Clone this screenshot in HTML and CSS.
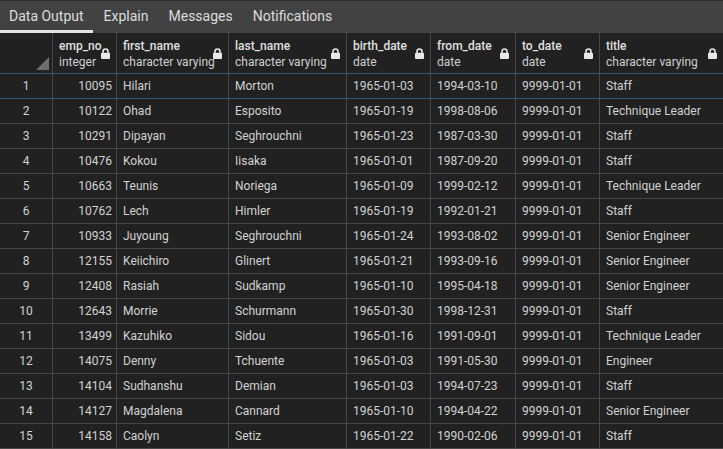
FILE: index.html
```html
<!DOCTYPE html>
<html>
<head>
<meta charset="utf-8">
<link rel="stylesheet" href="styles.css">
</head>
<body>
<div class="tabs">
  <div class="tab active">Data Output</div>
  <div class="tab">Explain</div>
  <div class="tab">Messages</div>
  <div class="tab">Notifications</div>
</div>
<div class="grid">
  <div class="row head">
    <div class="c c0 corner"><svg width="13" height="13" viewBox="0 0 13 13"><path d="M13 0 L13 13 L0 13 Z" fill="#6e6e6e"/></svg></div>
    <div class="c c1"><div class="n">emp_no</div><div class="t">integer</div><svg class="lock" viewBox="0 0 11 11"><path d="M3 5 V3.5 a2.5 2.5 0 0 1 5 0 V5" fill="none" stroke="#e8e8e8" stroke-width="1.6"/><rect x="1" y="4.8" width="9" height="6.2" rx="1" fill="#e8e8e8"/></svg></div>
    <div class="c c2"><div class="n">first_name</div><div class="t">character varying</div><svg class="lock" viewBox="0 0 11 11"><path d="M3 5 V3.5 a2.5 2.5 0 0 1 5 0 V5" fill="none" stroke="#e8e8e8" stroke-width="1.6"/><rect x="1" y="4.8" width="9" height="6.2" rx="1" fill="#e8e8e8"/></svg></div>
    <div class="c c3"><div class="n">last_name</div><div class="t">character varying</div><svg class="lock" viewBox="0 0 11 11"><path d="M3 5 V3.5 a2.5 2.5 0 0 1 5 0 V5" fill="none" stroke="#e8e8e8" stroke-width="1.6"/><rect x="1" y="4.8" width="9" height="6.2" rx="1" fill="#e8e8e8"/></svg></div>
    <div class="c c4"><div class="n">birth_date</div><div class="t">date</div><svg class="lock" viewBox="0 0 11 11"><path d="M3 5 V3.5 a2.5 2.5 0 0 1 5 0 V5" fill="none" stroke="#e8e8e8" stroke-width="1.6"/><rect x="1" y="4.8" width="9" height="6.2" rx="1" fill="#e8e8e8"/></svg></div>
    <div class="c c5"><div class="n">from_date</div><div class="t">date</div><svg class="lock" viewBox="0 0 11 11"><path d="M3 5 V3.5 a2.5 2.5 0 0 1 5 0 V5" fill="none" stroke="#e8e8e8" stroke-width="1.6"/><rect x="1" y="4.8" width="9" height="6.2" rx="1" fill="#e8e8e8"/></svg></div>
    <div class="c c6"><div class="n">to_date</div><div class="t">date</div><svg class="lock" viewBox="0 0 11 11"><path d="M3 5 V3.5 a2.5 2.5 0 0 1 5 0 V5" fill="none" stroke="#e8e8e8" stroke-width="1.6"/><rect x="1" y="4.8" width="9" height="6.2" rx="1" fill="#e8e8e8"/></svg></div>
    <div class="c c7"><div class="n">title</div><div class="t">character varying</div><svg class="lock" viewBox="0 0 11 11"><path d="M3 5 V3.5 a2.5 2.5 0 0 1 5 0 V5" fill="none" stroke="#e8e8e8" stroke-width="1.6"/><rect x="1" y="4.8" width="9" height="6.2" rx="1" fill="#e8e8e8"/></svg></div>
  </div>
  <div class="row sel"><div class="c c0">1</div><div class="c c1">10095</div><div class="c c2">Hilari</div><div class="c c3">Morton</div><div class="c c4">1965-01-03</div><div class="c c5">1994-03-10</div><div class="c c6">9999-01-01</div><div class="c c7">Staff</div></div>
  <div class="row"><div class="c c0">2</div><div class="c c1">10122</div><div class="c c2">Ohad</div><div class="c c3">Esposito</div><div class="c c4">1965-01-19</div><div class="c c5">1998-08-06</div><div class="c c6">9999-01-01</div><div class="c c7">Technique Leader</div></div>
  <div class="row"><div class="c c0">3</div><div class="c c1">10291</div><div class="c c2">Dipayan</div><div class="c c3">Seghrouchni</div><div class="c c4">1965-01-23</div><div class="c c5">1987-03-30</div><div class="c c6">9999-01-01</div><div class="c c7">Staff</div></div>
  <div class="row"><div class="c c0">4</div><div class="c c1">10476</div><div class="c c2">Kokou</div><div class="c c3">Iisaka</div><div class="c c4">1965-01-01</div><div class="c c5">1987-09-20</div><div class="c c6">9999-01-01</div><div class="c c7">Staff</div></div>
  <div class="row"><div class="c c0">5</div><div class="c c1">10663</div><div class="c c2">Teunis</div><div class="c c3">Noriega</div><div class="c c4">1965-01-09</div><div class="c c5">1999-02-12</div><div class="c c6">9999-01-01</div><div class="c c7">Technique Leader</div></div>
  <div class="row"><div class="c c0">6</div><div class="c c1">10762</div><div class="c c2">Lech</div><div class="c c3">Himler</div><div class="c c4">1965-01-19</div><div class="c c5">1992-01-21</div><div class="c c6">9999-01-01</div><div class="c c7">Staff</div></div>
  <div class="row"><div class="c c0">7</div><div class="c c1">10933</div><div class="c c2">Juyoung</div><div class="c c3">Seghrouchni</div><div class="c c4">1965-01-24</div><div class="c c5">1993-08-02</div><div class="c c6">9999-01-01</div><div class="c c7">Senior Engineer</div></div>
  <div class="row"><div class="c c0">8</div><div class="c c1">12155</div><div class="c c2">Keiichiro</div><div class="c c3">Glinert</div><div class="c c4">1965-01-21</div><div class="c c5">1993-09-16</div><div class="c c6">9999-01-01</div><div class="c c7">Senior Engineer</div></div>
  <div class="row"><div class="c c0">9</div><div class="c c1">12408</div><div class="c c2">Rasiah</div><div class="c c3">Sudkamp</div><div class="c c4">1965-01-10</div><div class="c c5">1995-04-18</div><div class="c c6">9999-01-01</div><div class="c c7">Senior Engineer</div></div>
  <div class="row"><div class="c c0">10</div><div class="c c1">12643</div><div class="c c2">Morrie</div><div class="c c3">Schurmann</div><div class="c c4">1965-01-30</div><div class="c c5">1998-12-31</div><div class="c c6">9999-01-01</div><div class="c c7">Staff</div></div>
  <div class="row"><div class="c c0">11</div><div class="c c1">13499</div><div class="c c2">Kazuhiko</div><div class="c c3">Sidou</div><div class="c c4">1965-01-16</div><div class="c c5">1991-09-01</div><div class="c c6">9999-01-01</div><div class="c c7">Technique Leader</div></div>
  <div class="row"><div class="c c0">12</div><div class="c c1">14075</div><div class="c c2">Denny</div><div class="c c3">Tchuente</div><div class="c c4">1965-01-03</div><div class="c c5">1991-05-30</div><div class="c c6">9999-01-01</div><div class="c c7">Engineer</div></div>
  <div class="row"><div class="c c0">13</div><div class="c c1">14104</div><div class="c c2">Sudhanshu</div><div class="c c3">Demian</div><div class="c c4">1965-01-03</div><div class="c c5">1994-07-23</div><div class="c c6">9999-01-01</div><div class="c c7">Staff</div></div>
  <div class="row"><div class="c c0">14</div><div class="c c1">14127</div><div class="c c2">Magdalena</div><div class="c c3">Cannard</div><div class="c c4">1965-01-10</div><div class="c c5">1994-04-22</div><div class="c c6">9999-01-01</div><div class="c c7">Senior Engineer</div></div>
  <div class="row"><div class="c c0">15</div><div class="c c1">14158</div><div class="c c2">Caolyn</div><div class="c c3">Setiz</div><div class="c c4">1965-01-22</div><div class="c c5">1990-02-06</div><div class="c c6">9999-01-01</div><div class="c c7">Staff</div></div>
</div>
</body>
</html>
```

FILE: styles.css
```css
* { box-sizing: border-box; }
html, body { margin: 0; padding: 0; }
body {
  width: 723px;
  height: 449px;
  overflow: hidden;
  background: #212121;
  font-family: Roboto, "Liberation Sans", sans-serif;
  color: #d2d2d2;
}
.tabs {
  display: flex;
  height: 33px;
  background: #424242;
  border-top: 1px solid #2c2c2c;
}
.tab {
  padding: 2px 9px 0 9px;
  margin-right: 2px;
  font-size: 14px;
  line-height: 27px;
  color: #dcdcdc;
  border-bottom: 3px solid transparent;
}
.tab.active {
  border-bottom-color: #e4e4e4;
}
.row {
  display: flex;
  height: 25px;
  border-bottom: 1px solid #474747;
}
.row.head {
  height: 41px;
  border-bottom-color: #2f5a7c;
}
.row.sel {
  border-bottom-color: #2f5a7c;
}
.c {
  border-right: 1px solid #474747;
  font-size: 12px;
  line-height: 24px;
  padding: 0 6px;
  white-space: nowrap;
  overflow: hidden;
  position: relative;
}
.c0 { width: 53px; text-align: center; }
.c1 { width: 64px; text-align: right; padding-right: 4px; }
.c2 { width: 112px; }
.c3 { width: 118px; }
.c4 { width: 84px; }
.c5 { width: 85px; }
.c6 { width: 84px; }
.c7 { flex: 1; border-right: none; }
.head .c {
  text-align: left;
  padding: 5px 6px 0 6px;
  line-height: 16px;
  color: #e0e0e0;
}
.head .n { font-size: 12px; font-weight: 500; }
.head .t { font-size: 12px; color: #cfcfcf; }
.lock {
  position: absolute;
  right: 5px;
  top: 15px;
  width: 11px;
  height: 11px;
}
.corner svg {
  position: absolute;
  right: 3px;
  bottom: 3px;
}
```
